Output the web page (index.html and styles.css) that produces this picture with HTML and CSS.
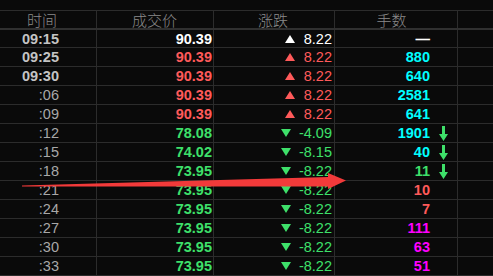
FILE: index.html
```html
<!DOCTYPE html>
<html lang="zh">
<head>
<meta charset="utf-8">
<link rel="stylesheet" href="styles.css">
</head>
<body>
<div class="table">
  <div class="row head">
    <div class="c time">时间</div>
    <div class="c price">成交价</div>
    <div class="c chg">涨跌</div>
    <div class="c vol">手数</div>
    <div class="c extra"></div>
  </div>

  <div class="row">
    <div class="c time b">09:15</div>
    <div class="c price white">90.39</div>
    <div class="c chg white"><span class="tri up"></span>8.22</div>
    <div class="c vol white"><span class="n">—</span><span class="ic"></span></div>
    <div class="c extra"></div>
  </div>
  <div class="row">
    <div class="c time b">09:25</div>
    <div class="c price red">90.39</div>
    <div class="c chg red"><span class="tri up"></span>8.22</div>
    <div class="c vol cyan"><span class="n">880</span><span class="ic"></span></div>
    <div class="c extra"></div>
  </div>
  <div class="row">
    <div class="c time b">09:30</div>
    <div class="c price red">90.39</div>
    <div class="c chg red"><span class="tri up"></span>8.22</div>
    <div class="c vol cyan"><span class="n">640</span><span class="ic"></span></div>
    <div class="c extra"></div>
  </div>
  <div class="row">
    <div class="c time">:06</div>
    <div class="c price red">90.39</div>
    <div class="c chg red"><span class="tri up"></span>8.22</div>
    <div class="c vol cyan"><span class="n">2581</span><span class="ic"></span></div>
    <div class="c extra"></div>
  </div>
  <div class="row">
    <div class="c time">:09</div>
    <div class="c price red">90.39</div>
    <div class="c chg red"><span class="tri up"></span>8.22</div>
    <div class="c vol cyan"><span class="n">641</span><span class="ic"></span></div>
    <div class="c extra"></div>
  </div>
  <div class="row">
    <div class="c time">:12</div>
    <div class="c price green">78.08</div>
    <div class="c chg green"><span class="tri down"></span>-4.09</div>
    <div class="c vol cyan"><span class="n">1901</span><span class="ic"><svg viewBox="0 0 9 15" width="9" height="15"><path d="M3 0h3v8h3l-4.5 7l-4.5-7h3z" fill="#3ee06a"/></svg></span></div>
    <div class="c extra"></div>
  </div>
  <div class="row">
    <div class="c time">:15</div>
    <div class="c price green">74.02</div>
    <div class="c chg green"><span class="tri down"></span>-8.15</div>
    <div class="c vol cyan"><span class="n">40</span><span class="ic"><svg viewBox="0 0 9 15" width="9" height="15"><path d="M3 0h3v8h3l-4.5 7l-4.5-7h3z" fill="#3ee06a"/></svg></span></div>
    <div class="c extra"></div>
  </div>
  <div class="row">
    <div class="c time">:18</div>
    <div class="c price green">73.95</div>
    <div class="c chg green"><span class="tri down"></span>-8.22</div>
    <div class="c vol green"><span class="n">11</span><span class="ic"><svg viewBox="0 0 9 15" width="9" height="15"><path d="M3 0h3v8h3l-4.5 7l-4.5-7h3z" fill="#3ee06a"/></svg></span></div>
    <div class="c extra"></div>
  </div>
  <div class="row">
    <div class="c time">:21</div>
    <div class="c price green">73.95</div>
    <div class="c chg green"><span class="tri down"></span>-8.22</div>
    <div class="c vol red"><span class="n">10</span><span class="ic"></span></div>
    <div class="c extra"></div>
  </div>
  <div class="row">
    <div class="c time">:24</div>
    <div class="c price green">73.95</div>
    <div class="c chg green"><span class="tri down"></span>-8.22</div>
    <div class="c vol red"><span class="n">7</span><span class="ic"></span></div>
    <div class="c extra"></div>
  </div>
  <div class="row">
    <div class="c time">:27</div>
    <div class="c price green">73.95</div>
    <div class="c chg green"><span class="tri down"></span>-8.22</div>
    <div class="c vol magenta"><span class="n">111</span><span class="ic"></span></div>
    <div class="c extra"></div>
  </div>
  <div class="row">
    <div class="c time">:30</div>
    <div class="c price green">73.95</div>
    <div class="c chg green"><span class="tri down"></span>-8.22</div>
    <div class="c vol magenta"><span class="n">63</span><span class="ic"></span></div>
    <div class="c extra"></div>
  </div>
  <div class="row">
    <div class="c time">:33</div>
    <div class="c price green">73.95</div>
    <div class="c chg green"><span class="tri down"></span>-8.22</div>
    <div class="c vol magenta"><span class="n">51</span><span class="ic"></span></div>
    <div class="c extra"></div>
  </div>
</div>

<svg class="overlay" width="493" height="276" viewBox="0 0 493 276">
  <polygon points="22,185.5 328,177 328,173 346,180.5 328,189 328,186.5 22,186.5" fill="#f23a3a"/>
</svg>
</body>
</html>
```

FILE: styles.css
```css
html, body {
  margin: 0;
  padding: 0;
  background: #0a0a0a;
  width: 493px;
  height: 276px;
  overflow: hidden;
}

body {
  position: relative;
  padding-top: 10px;
  box-sizing: border-box;
  font-family: "Liberation Sans", Arial, sans-serif;
}

.table {
  display: flex;
  flex-direction: column;
}

.row {
  display: grid;
  grid-template-columns: 97px 117px 121px 123px 1fr;
  height: 19px;
  border-bottom: 1px solid #2c2c2c;
  box-sizing: border-box;
}

.row.head {
  height: 20px;
  border-top: 1px solid #2c2c2c;
  border-bottom: 2px solid #303030;
}

.row.head + .row {
  height: 18px;
}

.c {
  border-right: 1px solid #2c2c2c;
  display: flex;
  align-items: center;
  justify-content: flex-end;
  font-size: 14.5px;
  line-height: 18px;
  white-space: nowrap;
}

.head .c {
  justify-content: center;
  font-family: "Noto Sans CJK SC", sans-serif;
  font-size: 15px;
  font-weight: 300;
  color: #8a8a8a;
  line-height: 17px;
}

.head .time { padding-right: 12px; }

.time {
  padding-right: 37px;
  color: #a8a8a8;
}

.time.b {
  font-weight: bold;
  color: #c4c4c4;
}

.price {
  padding-right: 1px;
  font-weight: bold;
}

.chg {
  padding-right: 2px;
}

.vol {
  font-weight: bold;
  padding-right: 9px;
}

.vol .n {
  flex: 1;
  text-align: right;
}

.vol .ic {
  width: 9px;
  margin-left: 9px;
  display: flex;
  align-items: center;
}

.extra { border-right: none; }

.tri {
  width: 0;
  height: 0;
  border-left: 5px solid transparent;
  border-right: 5px solid transparent;
  margin-right: 9px;
}

.tri.up { border-bottom: 8px solid currentColor; }
.tri.down { border-top: 8px solid currentColor; margin-right: 8px; }

.white { color: #ffffff; }
.red { color: #ff5a5a; }
.green { color: #3ee06a; }
.cyan { color: #00ffff; }
.magenta { color: #ff00ff; }

.overlay {
  position: absolute;
  left: 0;
  top: 0;
  pointer-events: none;
}
```
